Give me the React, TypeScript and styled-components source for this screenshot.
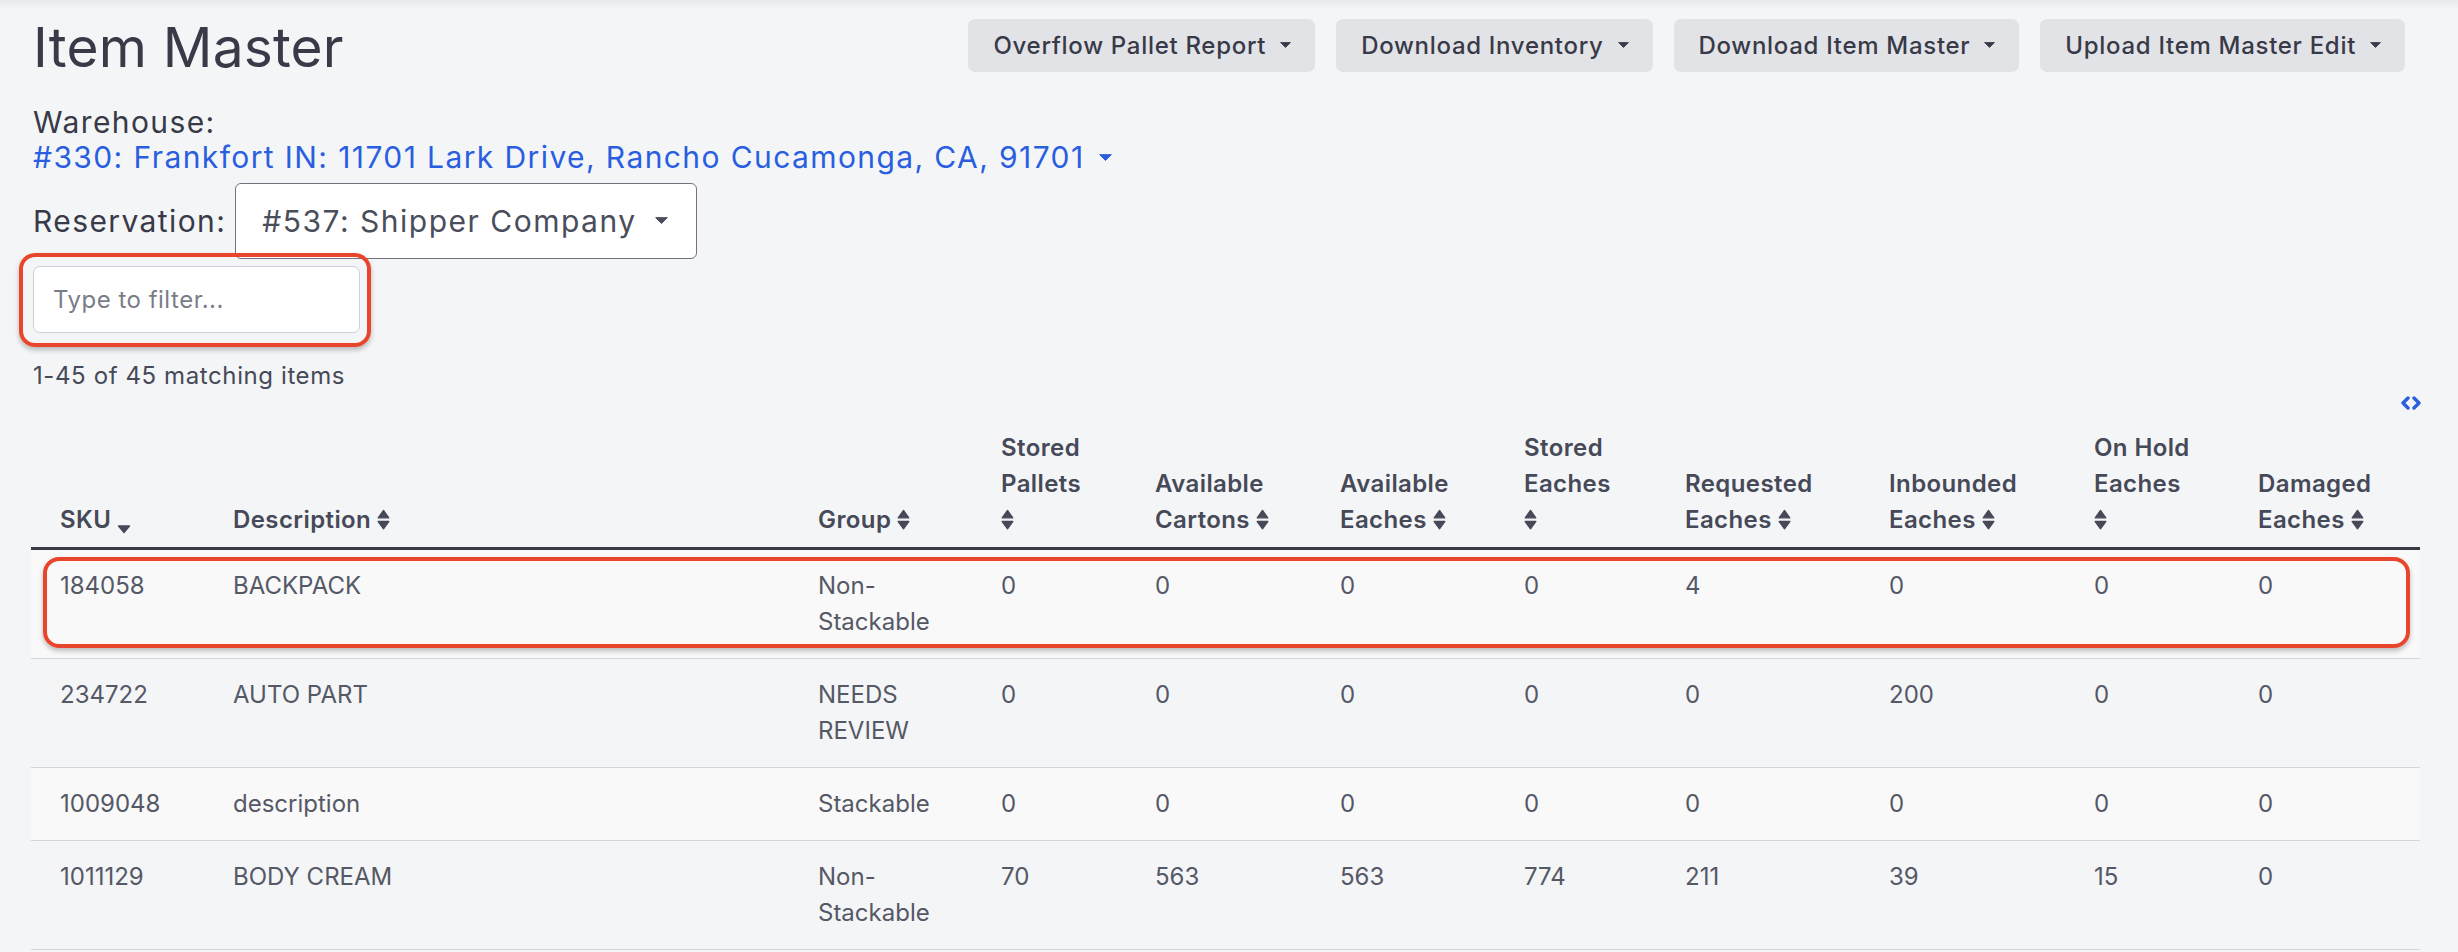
import React from "react";
import styled, { createGlobalStyle } from "styled-components";

const GlobalStyle = createGlobalStyle`
  html, body {
    margin: 0;
    padding: 0;
  }
  body {
    font-family: Inter, "Noto Sans", sans-serif;
    background: linear-gradient(#e9eaed 0, #f4f5f7 10px) #f4f5f7;
    color: #464957;
    min-height: 952px;
  }
`;

const columns = [
  { key: "sku", lines: ["SKU"], sort: "down", width: 173 },
  { key: "desc", lines: ["Description"], sort: "both", width: 585 },
  { key: "group", lines: ["Group"], sort: "both", width: 183 },
  { key: "pallets", lines: ["Stored", "Pallets", ""], sort: "both", width: 154 },
  { key: "cartons", lines: ["Available", "Cartons"], sort: "both", width: 185 },
  { key: "avEaches", lines: ["Available", "Eaches"], sort: "both", width: 184 },
  { key: "stEaches", lines: ["Stored", "Eaches", ""], sort: "both", width: 161 },
  { key: "reqEaches", lines: ["Requested", "Eaches"], sort: "both", width: 204 },
  { key: "inEaches", lines: ["Inbounded", "Eaches"], sort: "both", width: 205 },
  { key: "holdEaches", lines: ["On Hold", "Eaches", ""], sort: "both", width: 164 },
  { key: "dmgEaches", lines: ["Damaged", "Eaches"], sort: "both", width: 191 },
];

const rows = [
  ["184058", "BACKPACK", "Non-Stackable", "0", "0", "0", "0", "4", "0", "0", "0"],
  ["234722", "AUTO PART", "NEEDS REVIEW", "0", "0", "0", "0", "0", "200", "0", "0"],
  ["1009048", "description", "Stackable", "0", "0", "0", "0", "0", "0", "0", "0"],
  ["1011129", "BODY CREAM", "Non-Stackable", "70", "563", "563", "774", "211", "39", "15", "0"],
];

const actions = [
  "Overflow Pallet Report",
  "Download Inventory",
  "Download Item Master",
  "Upload Item Master Edit",
];

const Caret = ({ color = "currentColor", w = 11 }: { color?: string; w?: number }) => (
  <svg width={w} height={w * 0.55} viewBox="0 0 20 11">
    <path d="M1 1 H19 L10 10 Z" fill={color} stroke={color} strokeWidth="1.5" strokeLinejoin="round" />
  </svg>
);

const SortIcon = ({ dir }: { dir: string }) =>
  dir === "down" ? (
    <svg width="14" height="22" viewBox="0 0 14 22" style={{ marginBottom: -5 }}>
      <path d="M1.5 12 H12.5 L7 18.5 Z" fill="currentColor" stroke="currentColor" strokeWidth="1.3" strokeLinejoin="round" />
    </svg>
  ) : (
    <svg width="13" height="22" viewBox="0 0 13 22">
      <path d="M6.5 1.5 L11.8 8.8 H1.2 Z" fill="currentColor" stroke="currentColor" strokeWidth="1.3" strokeLinejoin="round" />
      <path d="M1.2 12.5 H11.8 L6.5 19.8 Z" fill="currentColor" stroke="currentColor" strokeWidth="1.3" strokeLinejoin="round" />
    </svg>
  );

const App = () => {
  return (
    <Page>
      <GlobalStyle />
      <TopBar>
        <Title>Item Master</Title>
        <Actions>
          {actions.map((a) => (
            <ActionButton key={a}>
              {a}
              <Caret />
            </ActionButton>
          ))}
        </Actions>
      </TopBar>

      <FieldLabel>Warehouse:</FieldLabel>
      <WarehouseLink href="#">
        #330: Frankfort IN: 11701 Lark Drive, Rancho Cucamonga, CA, 91701
        <Caret color="#2a5ee0" w={13} />
      </WarehouseLink>

      <ReservationRow>
        <FieldLabel>Reservation:</FieldLabel>
        <SelectBox>
          #537: Shipper Company
          <Caret color="#4a4d5a" w={13} />
        </SelectBox>
      </ReservationRow>

      <FilterWrap>
        <FilterInput placeholder="Type to filter..." />
        <Highlight />
      </FilterWrap>

      <CountText>1-45 of 45 matching items</CountText>

      <ToggleRow>
        <svg width="22" height="14" viewBox="0 0 22 14">
          <polyline points="8,2 3,7 8,12" fill="none" stroke="#2a5ee0" strokeWidth="3.4" strokeLinecap="round" strokeLinejoin="round" />
          <polyline points="14,2 19,7 14,12" fill="none" stroke="#2a5ee0" strokeWidth="3.4" strokeLinecap="round" strokeLinejoin="round" />
        </svg>
      </ToggleRow>

      <Table>
        <colgroup>
          {columns.map((c) => (
            <col key={c.key} style={{ width: c.width }} />
          ))}
        </colgroup>
        <thead>
          <tr>
            {columns.map((c) => (
              <HeadCell key={c.key}>
                {c.lines.map((l, i) => (
                  <HeadLine key={i}>
                    {l}
                    {i === c.lines.length - 1 && (
                      <SortWrap $alone={l === ""}>
                        <SortIcon dir={c.sort} />
                      </SortWrap>
                    )}
                  </HeadLine>
                ))}
              </HeadCell>
            ))}
          </tr>
        </thead>
        <tbody>
          {rows.map((r, ri) => (
            <BodyRow key={r[0]} $striped={ri % 2 === 0}>
              {r.map((v, ci) => (
                <Cell key={ci} $anchor={ri === 0 && ci === 0}>
                  {v}
                  {ri === 0 && ci === 0 && <RowHighlight />}
                </Cell>
              ))}
            </BodyRow>
          ))}
        </tbody>
      </Table>
    </Page>
  );
};

const Page = styled.div`
  padding: 15px 38px 0 31px;
  box-sizing: border-box;
  width: 2458px;
`;

const TopBar = styled.div`
  display: flex;
  justify-content: space-between;
  align-items: flex-start;
`;

const Title = styled.h1`
  margin: 0 0 0 2px;
  font-size: 55px;
  line-height: 65px;
  font-weight: 400;
  color: #383a48;
  letter-spacing: 0.2px;
`;

const Actions = styled.div`
  display: flex;
  gap: 21px;
  margin-top: 4px;
  margin-right: 15px;
`;

const ActionButton = styled.button`
  display: flex;
  align-items: center;
  gap: 14px;
  height: 53px;
  padding: 0 24px 0 25px;
  border: none;
  border-radius: 7px;
  background: #e2e3e7;
  color: #383a48;
  font-family: Inter, sans-serif;
  font-size: 24px;
  letter-spacing: 0.7px;
  font-weight: 500;
  cursor: pointer;
`;

const FieldLabel = styled.div`
  margin: 25px 0 0 2px;
  font-size: 30px;
  line-height: 35px;
  letter-spacing: 1.4px;
  color: #383a48;
`;

const WarehouseLink = styled.a`
  display: inline-flex;
  align-items: center;
  gap: 14px;
  margin-left: 2px;
  font-size: 30px;
  line-height: 35px;
  letter-spacing: 1.4px;
  color: #2a5ee0;
  text-decoration: none;
`;

const ReservationRow = styled.div`
  display: flex;
  align-items: center;
  gap: 9px;
  margin-top: 8px;

  ${FieldLabel} {
    margin-top: 0;
  }
`;

const SelectBox = styled.div`
  display: flex;
  align-items: center;
  justify-content: space-between;
  box-sizing: border-box;
  width: 462px;
  height: 76px;
  padding: 0 28px 0 26px;
  background: #fff;
  border: 1.5px solid #6f7380;
  border-radius: 6px;
  font-size: 30px;
  letter-spacing: 1.5px;
  color: #4a4d5a;
`;

const FilterWrap = styled.div`
  position: relative;
  width: 327px;
  margin: 7px 0 0 2px;
`;

const FilterInput = styled.input`
  display: block;
  box-sizing: border-box;
  width: 100%;
  height: 67px;
  padding: 0 19px;
  border: 1.5px solid #ccd0d8;
  border-radius: 7px;
  background: #fff;
  font-family: Inter, sans-serif;
  font-size: 24px;
  letter-spacing: 0.5px;
  color: #383a48;
  outline: none;

  &::placeholder {
    color: #7a7d88;
  }
`;

const Highlight = styled.div`
  position: absolute;
  top: -13px;
  left: -14px;
  right: -11px;
  bottom: -14px;
  border: 4.5px solid #e8452c;
  border-radius: 16px;
  box-shadow: 0 3px 5px rgba(0, 0, 0, 0.25);
  pointer-events: none;
`;

const CountText = styled.div`
  margin: 25px 0 0 2px;
  font-size: 24px;
  line-height: 36px;
  letter-spacing: 0.6px;
  color: #464957;
`;

const ToggleRow = styled.div`
  display: flex;
  justify-content: flex-end;
  height: 18px;
  margin-right: -2px;
  margin-top: 2px;
`;

const Table = styled.table`
  width: 2389px;
  table-layout: fixed;
  border-collapse: collapse;
  font-size: 24px;
  line-height: 36px;
`;

const HeadCell = styled.th`
  padding: 16px 0 9px 29px;
  text-align: left;
  vertical-align: bottom;
  font-weight: 600;
  letter-spacing: 0.4px;
  color: #464957;
  border-bottom: 3px solid #383a48;
`;

const HeadLine = styled.span`
  display: block;
  white-space: nowrap;
  height: 36px;
`;

const SortWrap = styled.span<{ $alone: boolean }>`
  display: inline-block;
  margin-left: ${(p) => (p.$alone ? "0" : "6px")};
  vertical-align: -3px;
`;

const BodyRow = styled.tr<{ $striped: boolean }>`
  background: ${(p) => (p.$striped ? "#f9f9fa" : "transparent")};
  border-bottom: 1px solid #d3d6dc;
`;

const Cell = styled.td<{ $anchor: boolean }>`
  position: ${(p) => (p.$anchor ? "relative" : "static")};
  padding: 18px 0 18px 29px;
  vertical-align: top;
  color: #555865;
`;

const RowHighlight = styled.div`
  position: absolute;
  top: 7px;
  left: 12px;
  width: 2367px;
  height: 91px;
  box-sizing: border-box;
  border: 4.5px solid #e8452c;
  border-radius: 16px;
  box-shadow: 0 3px 5px rgba(0, 0, 0, 0.25);
  pointer-events: none;
`;

export default App;
